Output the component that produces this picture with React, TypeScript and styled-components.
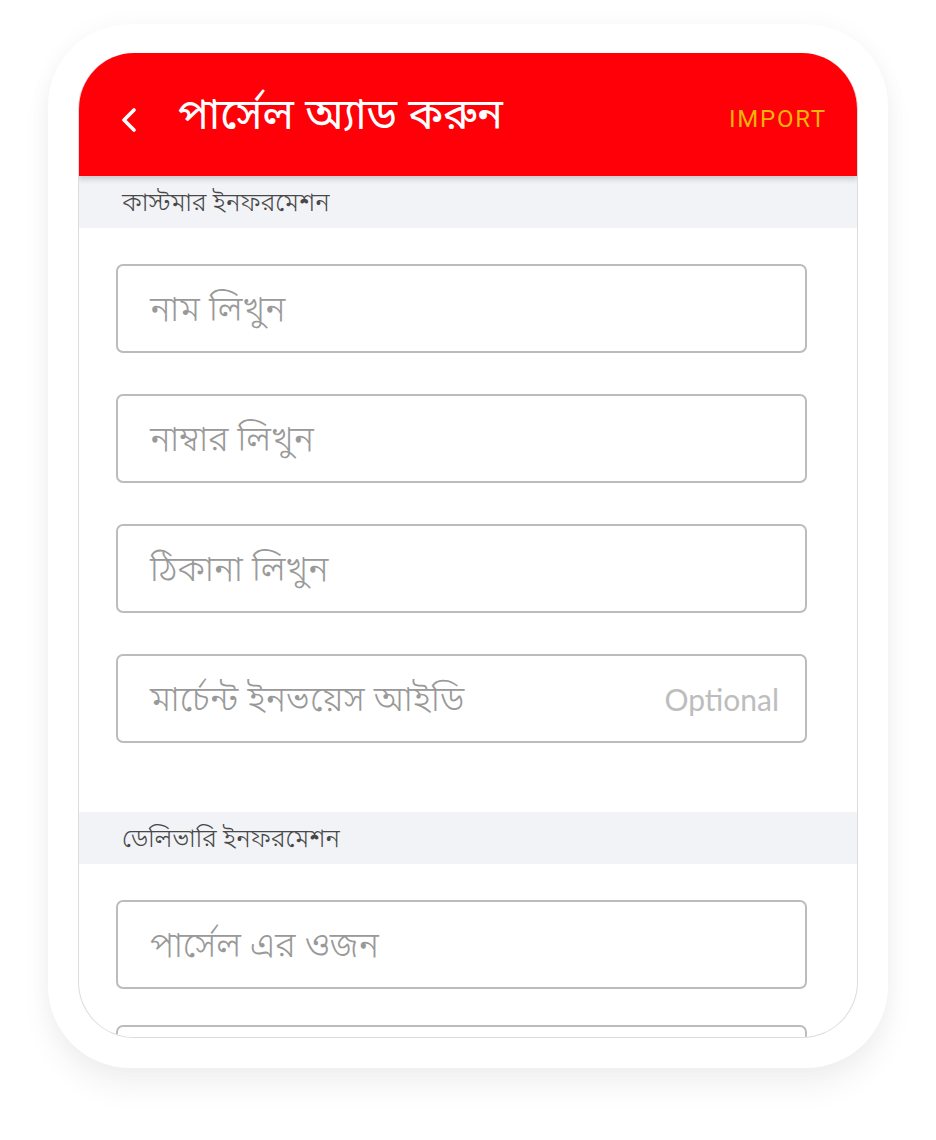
import React from "react";
import styled, { createGlobalStyle } from "styled-components";

const Global = createGlobalStyle`
  html, body { margin: 0; padding: 0; background: #ffffff; }
  body { font-family: "Noto Sans Bengali", "Noto Sans", "Lato", sans-serif; }
  * { box-sizing: border-box; }
`;

const Page = styled.div`
  width: 936px;
  height: 1140px;
  padding: 24px 48px 0 48px;
  background: #ffffff;
`;

const Frame = styled.div`
  width: 840px;
  height: 1044px;
  border-radius: 82px;
  background: #ffffff;
  box-shadow: 0 20px 30px rgba(0, 0, 0, 0.05), 0 0 24px rgba(0, 0, 0, 0.035);
  padding: 29px 30px 0 30px;
`;

const Screen = styled.div`
  width: 780px;
  height: 985px;
  border: 1px solid #dcdcdc;
  border-top: none;
  border-radius: 56px;
  overflow: hidden;
  background: #ffffff;
  display: flex;
  flex-direction: column;
`;

const Header = styled.header`
  flex: 0 0 123px;
  background: #ff0008;
  display: flex;
  align-items: center;
  padding: 8px 31px 0 43px;
  box-shadow: 0 3px 6px rgba(0, 0, 0, 0.18);
  position: relative;
  z-index: 1;
  margin: 0 -1px;
`;

const Back = styled.button`
  border: none;
  background: none;
  padding: 0;
  width: 20px;
  height: 26px;
  display: flex;
  align-items: center;
  margin-right: 37px;
  margin-top: 2px;
`;

const Title = styled.h1`
  margin: 0;
  flex: 1;
  color: #ffffff;
  font-size: 43px;
  font-weight: 400;
  line-height: 1;
  font-family: "Noto Sans Bengali", "Noto Sans", sans-serif;
`;

const Import = styled.span`
  color: #f7b30a;
  font-family: Roboto, "Liberation Sans", sans-serif;
  font-size: 24px;
  letter-spacing: 1.8px;
`;

const SectionBand = styled.div<{ $gapTop?: number }>`
  flex: 0 0 52px;
  margin-top: ${(p) => p.$gapTop ?? 0}px;
  background: #f2f3f7;
  display: flex;
  align-items: center;
  padding: 4px 0 0 43px;
  color: #484848;
  font-size: 25px;
  font-weight: 300;
  font-family: "Noto Sans Bengali", "Noto Sans", sans-serif;
`;

const Form = styled.div<{ $gap?: number }>`
  display: flex;
  flex-direction: column;
  gap: ${(p) => p.$gap ?? 41}px;
  padding: 36px 50px 0 37px;
`;

const Field = styled.div`
  flex: 0 0 89px;
  height: 89px;
  border: 2px solid #bcbcbc;
  border-radius: 7px;
  display: flex;
  align-items: center;
  justify-content: space-between;
  padding: 6px 26px 0 32px;
  background: #ffffff;
`;

const Placeholder = styled.span`
  color: #999999;
  font-size: 35px;
  font-weight: 300;
  font-family: "Noto Sans Bengali", "Noto Sans", sans-serif;
`;

const Hint = styled.span`
  color: #bdbdbd;
  font-size: 30px;
  font-family: Lato, "Noto Sans", sans-serif;
  margin-top: -6px;
`;

const customerFields = [
  { label: "নাম লিখুন" },
  { label: "নাম্বার লিখুন" },
  { label: "ঠিকানা লিখুন" },
  { label: "মার্চেন্ট ইনভয়েস আইডি", hint: "Optional" },
];

const deliveryFields = [{ label: "পার্সেল এর ওজন" }, { label: "" }];

export default function App() {
  return (
    <>
      <Global />
      <Page>
        <Frame>
          <Screen>
            <Header>
              <Back aria-label="back">
                <svg width="16" height="24" viewBox="0 0 16 24">
                  <polyline
                    points="13,2 3,12 13,22"
                    fill="none"
                    stroke="#ffffff"
                    strokeWidth="3.6"
                    strokeLinecap="round"
                    strokeLinejoin="round"
                  />
                </svg>
              </Back>
              <Title>পার্সেল অ্যাড করুন</Title>
              <Import>IMPORT</Import>
            </Header>
            <SectionBand>কাস্টমার ইনফরমেশন</SectionBand>
            <Form>
              {customerFields.map((f) => (
                <Field key={f.label}>
                  <Placeholder>{f.label}</Placeholder>
                  {f.hint && <Hint>{f.hint}</Hint>}
                </Field>
              ))}
            </Form>
            <SectionBand $gapTop={69}>ডেলিভারি ইনফরমেশন</SectionBand>
            <Form $gap={36}>
              {deliveryFields.map((f, i) => (
                <Field key={i}>
                  <Placeholder>{f.label}</Placeholder>
                </Field>
              ))}
            </Form>
          </Screen>
        </Frame>
      </Page>
    </>
  );
}
